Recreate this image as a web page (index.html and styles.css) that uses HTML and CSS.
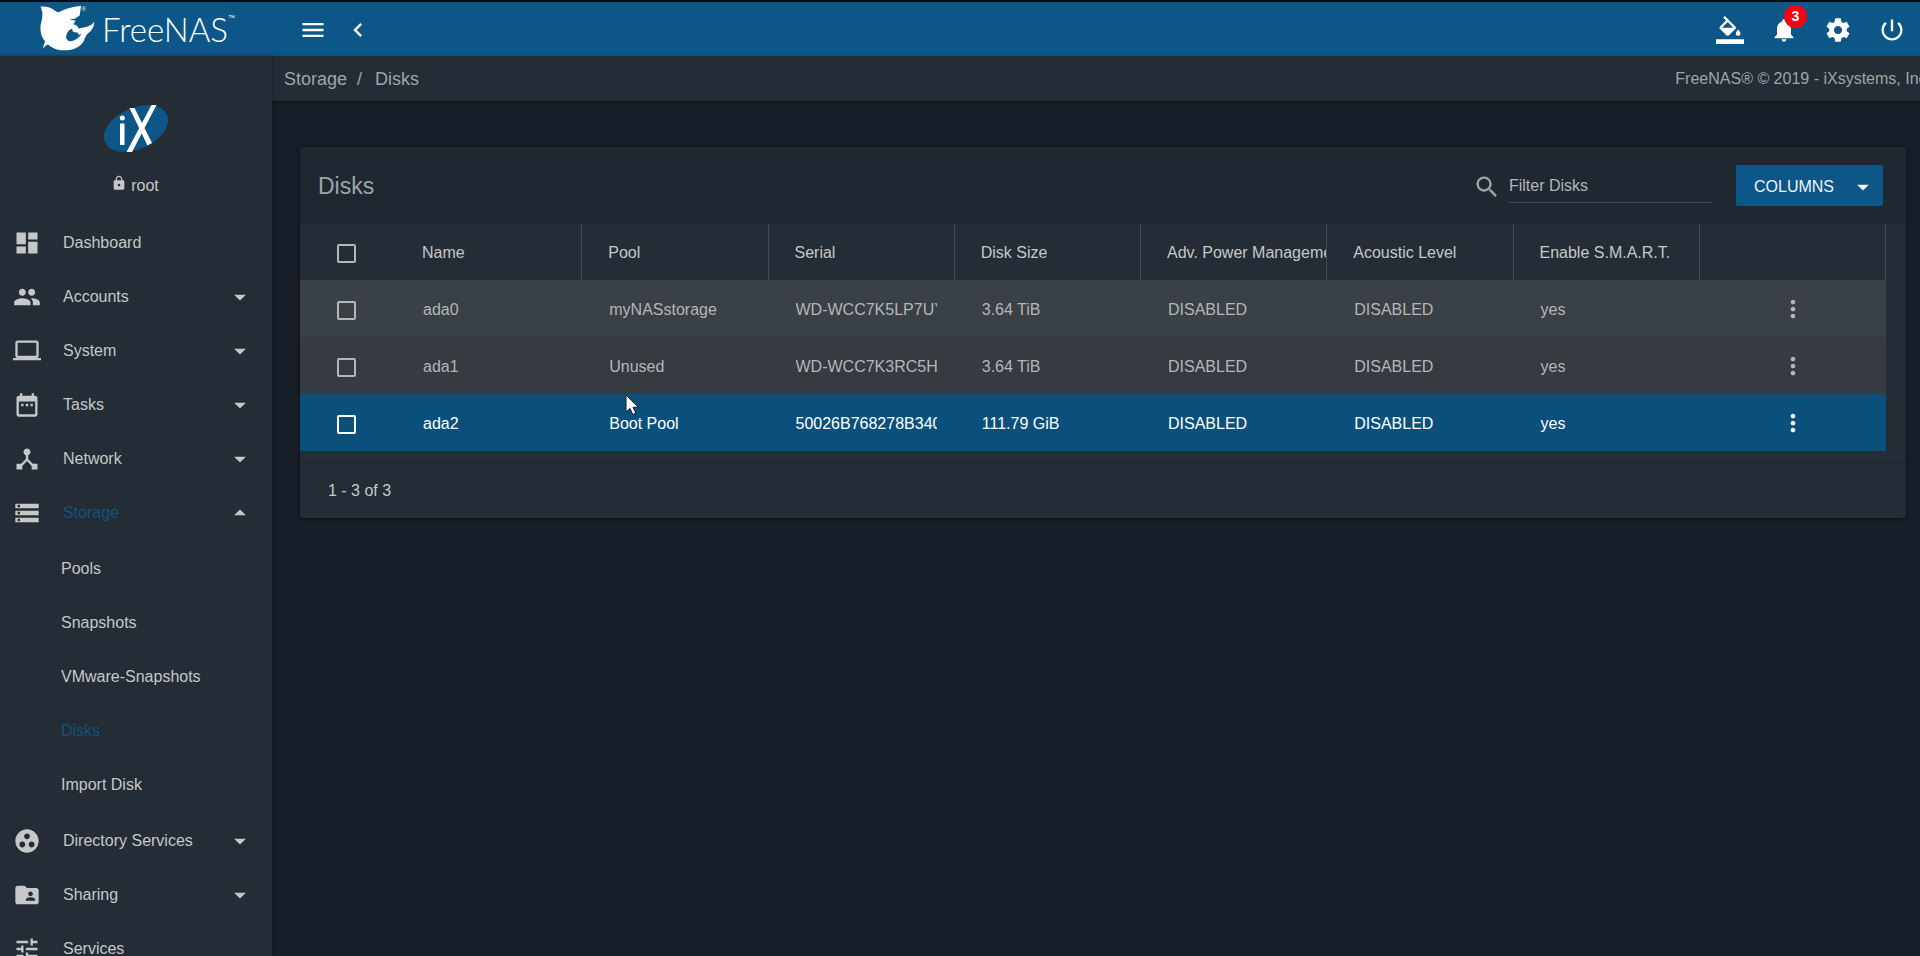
FILE: index.html
```html
<!DOCTYPE html>
<html lang="en">
<head>
    <meta charset="UTF-8">
    <meta name="viewport" content="width=device-width, initial-scale=1.0">
    <title>FreeNAS - Disks</title>
    <link rel="stylesheet" href="styles.css">
</head>
<body>
    <!-- Icon sprite -->
    <svg class="sprite" aria-hidden="true">
        <symbol id="menu" viewBox="0 0 24 24"><path d="M3 18h18v-2H3v2zm0-5h18v-2H3v2zm0-7v2h18V6H3z"/></symbol>
        <symbol id="chevron-left" viewBox="0 0 24 24"><path d="M15.41 7.41L14 6l-6 6 6 6 1.41-1.41L10.83 12z"/></symbol>
        <symbol id="color-fill" viewBox="0 0 24 24"><path d="M16.56 8.94L7.62 0 6.21 1.41l2.38 2.38-5.15 5.15c-.59.59-.59 1.54 0 2.12l5.5 5.5c.29.29.68.44 1.06.44s.77-.15 1.06-.44l5.5-5.5c.59-.58.59-1.53 0-2.12zM5.21 10L10 5.21 14.79 10H5.21zM19 11.5s-2 2.17-2 3.5c0 1.1.9 2 2 2s2-.9 2-2c0-1.33-2-3.5-2-3.5zM0 20h24v4H0v-4z"/></symbol>
        <symbol id="bell" viewBox="0 0 24 24"><path d="M12 22c1.1 0 2-.9 2-2h-4c0 1.1.89 2 2 2zm6-6v-5c0-3.07-1.64-5.64-4.5-6.32V4c0-.83-.67-1.5-1.5-1.5s-1.5.67-1.5 1.5v.68C7.63 5.36 6 7.92 6 11v5l-2 2v1h16v-1l-2-2z"/></symbol>
        <symbol id="settings" viewBox="0 0 24 24"><path d="M19.43 12.98c.04-.32.07-.64.07-.98s-.03-.66-.07-.98l2.11-1.65c.19-.15.24-.42.12-.64l-2-3.46c-.12-.22-.39-.3-.61-.22l-2.49 1c-.52-.4-1.08-.73-1.69-.98l-.38-2.65C14.46 2.18 14.25 2 14 2h-4c-.25 0-.46.18-.49.42l-.38 2.65c-.61.25-1.17.59-1.69.98l-2.49-1c-.23-.09-.49 0-.61.22l-2 3.46c-.13.22-.07.49.12.64l2.11 1.65c-.04.32-.07.65-.07.98s.03.66.07.98l-2.11 1.65c-.19.15-.24.42-.12.64l2 3.46c.12.22.39.3.61.22l2.49-1c.52.4 1.08.73 1.69.98l.38 2.65c.03.24.24.42.49.42h4c.25 0 .46-.18.49-.42l.38-2.65c.61-.25 1.17-.59 1.69-.98l2.49 1c.23.09.49 0 .61-.22l2-3.46c.12-.22.07-.49-.12-.64l-2.11-1.65zM12 15.5c-1.93 0-3.5-1.57-3.5-3.5s1.57-3.5 3.5-3.5 3.5 1.57 3.5 3.5-1.57 3.5-3.5 3.5z"/></symbol>
        <symbol id="power" viewBox="0 0 24 24"><path d="M13 3h-2v10h2V3zm4.83 2.17l-1.42 1.42C17.99 7.86 19 9.81 19 12c0 3.87-3.13 7-7 7s-7-3.13-7-7c0-2.19 1.01-4.14 2.58-5.42L6.17 5.17C4.23 6.82 3 9.26 3 12c0 4.97 4.03 9 9 9s9-4.03 9-9c0-2.74-1.23-5.18-3.17-6.83z"/></symbol>
        <symbol id="lock" viewBox="0 0 24 24"><path d="M18 8h-1V6c0-2.76-2.24-5-5-5S7 3.24 7 6v2H6c-1.100 0-2 .9-2 2v10c0 1.100.9 2 2 2h12c1.100 0 2-.9 2-2V10c0-1.100-.9-2-2-2zm-6 9c-1.100 0-2-.9-2-2s.9-2 2-2 2 .9 2 2-.9 2-2 2zm3.100-9H8.900V6c0-1.710 1.390-3.100 3.100-3.100 1.710 0 3.100 1.390 3.100 3.100v2z"/></symbol>
        <symbol id="dashboard" viewBox="0 0 24 24"><path d="M3 13h8V3H3v10zm0 8h8v-6H3v6zm10 0h8V11h-8v10zm0-18v6h8V3h-8z"/></symbol>
        <symbol id="group" viewBox="0 0 24 24"><path d="M16 11c1.66 0 2.99-1.34 2.99-3S17.66 5 16 5c-1.66 0-3 1.34-3 3s1.34 3 3 3zm-8 0c1.66 0 2.99-1.34 2.99-3S9.66 5 8 5C6.34 5 5 6.34 5 8s1.34 3 3 3zm0 2c-2.33 0-7 1.17-7 3.5V19h14v-2.500c0-2.330-4.670-3.500-7-3.500zm8 0c-.29 0-.62.020-.97.050 1.160.84 1.970 1.970 1.970 3.450V19h6v-2.500c0-2.330-4.670-3.500-7-3.500z"/></symbol>
        <symbol id="laptop" viewBox="0 0 24 24"><path d="M20 18c1.100 0 1.990-.9 1.990-2L22 5c0-1.100-.9-2-2-2H4c-1.100 0-2 .9-2 2v11c0 1.100.9 2 2 2H0v2h24v-2h-4zM4 5h16v11H4V5z"/></symbol>
        <symbol id="date" viewBox="0 0 24 24"><path d="M9 11H7v2h2v-2zm4 0h-2v2h2v-2zm4 0h-2v2h2v-2zm2-7h-1V2h-2v2H8V2H6v2H5c-1.110 0-1.990.9-1.990 2L3 20c0 1.100.89 2 2 2h14c1.100 0 2-.9 2-2V6c0-1.100-.9-2-2-2zm0 16H5V9h14v11z"/></symbol>
        <symbol id="hub" viewBox="0 0 24 24"><path d="M17 16l-4-4V8.820C14.160 8.400 15 7.300 15 6c0-1.660-1.340-3-3-3S9 4.340 9 6c0 1.300.84 2.400 2 2.820V12l-4 4H3v5h5v-3.050l4-4.200 4 4.200V21h5v-5h-4z"/></symbol>
        <symbol id="storage" viewBox="0 0 24 24"><path d="M2 20h20v-4H2v4zm2-3h2v2H4v-2zM2 4v4h20V4H2zm4 3H4V5h2v2zm-4 7h20v-4H2v4zm2-3h2v2H4v-2z"/></symbol>
        <symbol id="group-work" viewBox="0 0 24 24"><path d="M12 2C6.480 2 2 6.480 2 12s4.480 10 10 10 10-4.480 10-10S17.520 2 12 2zM8 17.500c-1.380 0-2.500-1.120-2.500-2.500s1.120-2.500 2.500-2.500 2.500 1.120 2.500 2.500-1.120 2.500-2.500 2.500zM9.500 8c0-1.380 1.120-2.500 2.500-2.500s2.500 1.120 2.500 2.500-1.120 2.500-2.500 2.500S9.500 9.380 9.500 8zm6.500 9.500c-1.380 0-2.500-1.120-2.500-2.500s1.120-2.500 2.500-2.500 2.500 1.120 2.500 2.500-1.120 2.500-2.500 2.500z"/></symbol>
        <symbol id="folder-shared" viewBox="0 0 24 24"><path d="M20 6h-8l-2-2H4c-1.100 0-1.990.9-1.990 2L2 18c0 1.100.9 2 2 2h16c1.100 0 2-.9 2-2V8c0-1.100-.9-2-2-2zm-5 3c1.100 0 2 .9 2 2s-.9 2-2 2-2-.9-2-2 .9-2 2-2zm4 8h-8v-1c0-1.330 2.670-2 4-2s4 .67 4 2v1z"/></symbol>
        <symbol id="tune" viewBox="0 0 24 24"><path d="M3 17v2h6v-2H3zM3 5v2h10V5H3zm10 16v-2h8v-2h-8v-2h-2v6h2zM7 9v2H3v2h4v2h2V9H7zm14 4v-2H11v2h10zm-6-4h2V7h4V5h-4V3h-2v6z"/></symbol>
        <symbol id="arrow-down" viewBox="0 0 24 24"><path d="M7 10l5 5 5-5z"/></symbol>
        <symbol id="arrow-up" viewBox="0 0 24 24"><path d="M7 14l5-5 5 5z"/></symbol>
        <symbol id="search" viewBox="0 0 24 24"><path d="M15.500 14h-.79l-.28-.27C15.410 12.590 16 11.110 16 9.500 16 5.910 13.090 3 9.500 3S3 5.910 3 9.500 5.910 16 9.500 16c1.610 0 3.090-.59 4.230-1.570l.27.28v.79l5 4.990L20.490 19l-4.990-5zm-6 0C7.010 14 5 11.990 5 9.500S7.010 5 9.500 5 14 7.010 14 9.500 11.990 14 9.500 14z"/></symbol>
        <symbol id="more" viewBox="0 0 24 24"><path d="M12 8c1.100 0 2-.9 2-2s-.9-2-2-2-2 .9-2 2 .9 2 2 2zm0 2c-1.100 0-2 .9-2 2s.9 2 2 2 2-.9 2-2-.9-2-2-2zm0 6c-1.100 0-2 .9-2 2s.9 2 2 2 2-.9 2-2-.9-2-2-2z"/></symbol>
    </svg>

    <header class="topbar">
        <a class="brand" href="#" aria-label="FreeNAS">
            <svg class="fish" viewBox="36 2 68 54">
                <path d="M40.700 6C46 5.500 52 7 56 10.500Q58 12 60 11.500C66 8 74 6 82.400 5L81 15 76 18.500 70 19 77 20.500 74.500 24 78 25.500 80 28.500 85 27.500C90 27 94 24.500 96 21.500 96 28 92.500 31 89 34 87 37 86 39 85.500 41 82 47 75 51 65 51 58 51 52 48.500 48.500 45 47.500 45 45 47 43.500 49 43.500 46 44.500 44 45.500 42 42 38 40.500 33 40.500 28 40.500 23 42.500 20 42.500 16 43 12 42 9 40.700 6Z"/>
                <path class="fish-gap" d="M73.500 28.500C69 30 66.500 34.500 67.200 39L70 41.500C74.500 42 79.500 39.500 83 34 80.500 35.500 78.500 34 79.500 32.500 77 32.500 72.500 33 73.500 28.500Z"/>
                <text class="fish-mark" x="83" y="10">®</text>
            </svg>
            <span class="brand-name">FreeNAS</span><span class="brand-tm">™</span>
        </a>
        <div class="topbar-left">
            <button class="icon-button" aria-label="Toggle menu"><svg class="icon"><use href="#menu"/></svg></button>
            <button class="icon-button" aria-label="Collapse menu"><svg class="icon"><use href="#chevron-left"/></svg></button>
        </div>
        <div class="topbar-right">
            <button class="icon-button" aria-label="Theme"><svg class="icon"><use href="#color-fill"/></svg></button>
            <button class="icon-button" aria-label="Alerts"><svg class="icon"><use href="#bell"/></svg><span class="badge">3</span></button>
            <button class="icon-button" aria-label="Settings"><svg class="icon"><use href="#settings"/></svg></button>
            <button class="icon-button" aria-label="Power"><svg class="icon"><use href="#power"/></svg></button>
        </div>
    </header>

    <div class="layout">
        <aside class="sidebar">
            <div class="user">
                <svg class="ix-logo" viewBox="0 0 64 48">
                    <ellipse cx="32" cy="24.500" rx="34" ry="20.500" transform="rotate(-24 32 24.500)"/>
                    <path d="M16 19.500h4.500V41H16zM25.500 4H30.500L48 39 43.500 41.500zM47.500 1H52.500L28 48H22.500z"/>
                    <circle class="ix-dot" cx="18.300" cy="14" r="2.500"/>
                </svg>
                <div class="user-name"><svg class="icon-small"><use href="#lock"/></svg>root</div>
            </div>
            <nav>
                <ul class="nav">
                    <li><a class="nav-item" href="#"><svg class="icon"><use href="#dashboard"/></svg>Dashboard</a></li>
                    <li><button class="nav-item"><svg class="icon"><use href="#group"/></svg>Accounts<svg class="icon arrow"><use href="#arrow-down"/></svg></button></li>
                    <li><button class="nav-item"><svg class="icon"><use href="#laptop"/></svg>System<svg class="icon arrow"><use href="#arrow-down"/></svg></button></li>
                    <li><button class="nav-item"><svg class="icon"><use href="#date"/></svg>Tasks<svg class="icon arrow"><use href="#arrow-down"/></svg></button></li>
                    <li><button class="nav-item"><svg class="icon"><use href="#hub"/></svg>Network<svg class="icon arrow"><use href="#arrow-down"/></svg></button></li>
                    <li>
                        <button class="nav-item active" aria-expanded="true"><svg class="icon"><use href="#storage"/></svg>Storage<svg class="icon arrow"><use href="#arrow-up"/></svg></button>
                        <ul class="subnav">
                            <li><a class="nav-item" href="#">Pools</a></li>
                            <li><a class="nav-item" href="#">Snapshots</a></li>
                            <li><a class="nav-item" href="#">VMware-Snapshots</a></li>
                            <li><a class="nav-item active" href="#">Disks</a></li>
                            <li><a class="nav-item" href="#">Import Disk</a></li>
                        </ul>
                    </li>
                    <li><button class="nav-item"><svg class="icon"><use href="#group-work"/></svg>Directory Services<svg class="icon arrow"><use href="#arrow-down"/></svg></button></li>
                    <li><button class="nav-item"><svg class="icon"><use href="#folder-shared"/></svg>Sharing<svg class="icon arrow"><use href="#arrow-down"/></svg></button></li>
                    <li><a class="nav-item" href="#"><svg class="icon"><use href="#tune"/></svg>Services</a></li>
                </ul>
            </nav>
        </aside>

        <main class="content">
            <div class="breadcrumb">
                <div class="crumbs"><a href="#">Storage</a><span>/</span><a href="#">Disks</a></div>
                <div class="copyright">FreeNAS® © 2019 - iXsystems, Inc.</div>
            </div>

            <section class="card">
                <div class="card-header">
                    <h1>Disks</h1>
                    <label class="filter">
                        <svg class="icon"><use href="#search"/></svg>
                        <input type="text" placeholder="Filter Disks" aria-label="Filter Disks">
                    </label>
                    <button class="columns-button">COLUMNS<svg class="icon"><use href="#arrow-down"/></svg></button>
                </div>

                <div class="card-body">
                    <table class="disks">
                        <thead>
                            <tr>
                                <th class="check"><input type="checkbox" aria-label="Select all"></th>
                                <th>Name</th>
                                <th>Pool</th>
                                <th>Serial</th>
                                <th>Disk Size</th>
                                <th>Adv. Power Management</th>
                                <th>Acoustic Level</th>
                                <th>Enable S.M.A.R.T.</th>
                                <th></th>
                            </tr>
                        </thead>
                        <tbody>
                            <tr>
                                <td class="check"><input type="checkbox" aria-label="Select ada0"></td>
                                <td>ada0</td>
                                <td>myNASstorage</td>
                                <td><div class="clip">WD-WCC7K5LP7UY</div></td>
                                <td>3.64 TiB</td>
                                <td>DISABLED</td>
                                <td>DISABLED</td>
                                <td>yes</td>
                                <td class="actions"><button class="icon-button" aria-label="ada0 options"><svg class="icon"><use href="#more"/></svg></button></td>
                            </tr>
                            <tr>
                                <td class="check"><input type="checkbox" aria-label="Select ada1"></td>
                                <td>ada1</td>
                                <td>Unused</td>
                                <td><div class="clip">WD-WCC7K3RC5H</div></td>
                                <td>3.64 TiB</td>
                                <td>DISABLED</td>
                                <td>DISABLED</td>
                                <td>yes</td>
                                <td class="actions"><button class="icon-button" aria-label="ada1 options"><svg class="icon"><use href="#more"/></svg></button></td>
                            </tr>
                            <tr class="hovered">
                                <td class="check"><input type="checkbox" aria-label="Select ada2"></td>
                                <td>ada2</td>
                                <td>Boot Pool</td>
                                <td><div class="clip">50026B768278B340</div></td>
                                <td>111.79 GiB</td>
                                <td>DISABLED</td>
                                <td>DISABLED</td>
                                <td>yes</td>
                                <td class="actions"><button class="icon-button" aria-label="ada2 options"><svg class="icon"><use href="#more"/></svg></button></td>
                            </tr>
                        </tbody>
                    </table>
                </div>

                <div class="card-footer">1 - 3 of 3</div>
            </section>
        </main>
    </div>

    <svg class="pointer" viewBox="0 0 15 22" aria-hidden="true"><path d="M1 1v17l4-3.500 2.800 6 3-1.400-2.800-5.800h5.500z"/></svg>
</body>
</html>
```

FILE: styles.css
```css
* {
    box-sizing: border-box;
}

body {
    font-family: "Liberation Sans", Arial, sans-serif;
    font-size: 16px;
    line-height: 24px;
    background-color: #171e27;
    color: #c6c7c8;
    margin: 0;
    height: 100vh;
    display: flex;
    flex-direction: column;
    overflow: hidden;
}

a {
    color: inherit;
    text-decoration: none;
}

button {
    font: inherit;
    color: inherit;
    background: none;
    border: 0;
    padding: 0;
    cursor: pointer;
}

ul {
    list-style: none;
    margin: 0;
    padding: 0;
}

.sprite {
    display: none;
}

.icon {
    width: 28px;
    height: 28px;
    flex: none;
    display: block;
    fill: currentColor;
}

.icon-small {
    width: 16px;
    height: 18px;
    fill: currentColor;
}

.icon-button {
    position: relative;
    display: inline-block;
}

/* Top bar */
.topbar {
    height: 56px;
    flex: none;
    display: flex;
    align-items: center;
    background-color: #0d5788;
    border-top: 2px solid #05090d;
    color: #fff;
}

.brand {
    width: 272px;
    height: 54px;
    padding-left: 36px;
    display: flex;
    border-right: 1px solid #0b5182;
}

.fish {
    width: 66px;
    height: 54px;
    fill: #fff;
}

.fish .fish-gap {
    fill: #0d5788;
}

.fish-mark {
    font-size: 6px;
}

.brand-name {
    font-family: Lato, sans-serif;
    font-weight: 300;
    font-size: 33px;
    line-height: 54px;
}

.brand-tm {
    font-size: 7px;
    line-height: 32px;
}

.topbar-left {
    display: flex;
    gap: 17px;
    padding-top: 2px;
    padding-left: 27px;
}

.topbar-right {
    display: flex;
    gap: 26px;
    margin-left: auto;
    padding-top: 2px;
    padding-right: 14px;
}

.badge {
    position: absolute;
    top: -11px;
    right: -9px;
    width: 23px;
    height: 23px;
    border-radius: 50%;
    background-color: #f80314;
    font-size: 14px;
    font-weight: bold;
    line-height: 23px;
    text-align: center;
}

/* Sidebar */
.layout {
    flex: 1;
    min-height: 0;
    display: flex;
}

.sidebar {
    width: 272px;
    flex: none;
    overflow: hidden;
    background-color: #242d35;
    box-shadow: 0 0 4px rgba(0, 0, 0, 0.4);
    z-index: 1;
}

.user {
    display: flex;
    flex-direction: column;
    align-items: center;
    gap: 22px;
    padding: 48px 0 18px;
}

.ix-logo {
    width: 64px;
    height: 48px;
    fill: #fff;
}

.ix-logo ellipse {
    fill: #0d5788;
}

.user-name {
    display: flex;
    gap: 4px;
    padding-right: 2px;
}

.nav-item {
    width: 100%;
    height: 54px;
    display: flex;
    align-items: center;
    gap: 22px;
    padding: 0 18px 0 13px;
    text-align: left;
}

.nav-item.active {
    color: #0f5280;
}

.nav-item .icon {
    color: #c6c7c8;
}

.nav-item .arrow {
    margin-left: auto;
}

.subnav {
    padding: 2px 0;
}

.subnav .nav-item {
    padding-left: 61px;
}

/* Main area */
.content {
    flex: 1;
    min-width: 0;
}

.breadcrumb {
    height: 45px;
    display: flex;
    justify-content: space-between;
    align-items: center;
    padding-top: 1px;
    padding-left: 12px;
    background-color: #242d35;
    box-shadow: 0 1px 3px rgba(0, 0, 0, 0.4);
    color: #a1a3a5;
    white-space: nowrap;
}

.crumbs {
    display: flex;
    gap: 10px;
    font-size: 18px;
}

.crumbs a:last-child {
    padding-left: 3px;
}

/* the copyright line runs off the window edge */
.copyright {
    margin-right: -11px;
}

.card {
    margin: 46px 14px 0 28px;
    background-color: #242d35;
    border-radius: 3px;
    box-shadow: 0 1px 4px rgba(0, 0, 0, 0.5);
}

.card-header {
    display: flex;
    align-items: center;
    height: 77px;
    padding: 0 23px 0 18px;
    background-color: #1f2830;
    border-bottom: 1px solid #1c242c;
    border-radius: 3px 3px 0 0;
}

.card-header h1 {
    margin: 0 auto 0 0;
    padding-top: 2px;
    font-size: 23px;
    font-weight: normal;
    color: #a1a3a5;
}

.filter {
    display: flex;
    align-items: center;
    gap: 8px;
    margin-right: 23px;
    padding-top: 3px;
    color: #a1a3a5;
}

.filter input {
    width: 204px;
    height: 32px;
    padding: 0;
    background: none;
    border: 0;
    border-bottom: 1px solid #444a53;
    font: inherit;
    color: #c6c7c8;
    outline: none;
}

.filter input::placeholder {
    color: #b4b6b7;
    opacity: 1;
}

.columns-button {
    display: flex;
    align-items: center;
    gap: 15px;
    height: 41px;
    padding: 3px 6px 0 18px;
    background-color: #0d5788;
    border-radius: 2px;
    color: #f0f4f7;
}

/* Table */
.card-body {
    padding: 0 20px 11px 0;
}

.disks {
    width: 100%;
    table-layout: fixed;
    border-collapse: separate;
    border-spacing: 0;
}

.disks th {
    height: 56px;
    padding: 2px 0 0 26px;
    border-right: 1px solid #444b52;
    font-weight: normal;
    text-align: left;
    white-space: nowrap;
    overflow: hidden;
}

.disks td {
    height: 57px;
    padding: 3px 18px 0 27px;
    white-space: nowrap;
    color: #b4b6b7;
    background-color: #394046;
}

.disks tr:nth-child(2) td {
    background-color: #353b41;
}

.disks .hovered td {
    background-color: #0b507d;
    color: #fff;
}

.disks .check {
    width: 96px;
    padding-right: 0;
    padding-left: 37px;
    border: 0;
}

.disks .actions {
    padding: 0;
    text-align: center;
}

.actions .icon-button {
    display: block;
    margin: 0 auto;
}

.clip {
    overflow: hidden;
}

input[type="checkbox"] {
    appearance: none;
    display: block;
    width: 19px;
    height: 19px;
    margin: 0;
    border: 2px solid #b4b6b7;
    border-radius: 2px;
}

.hovered input[type="checkbox"] {
    border-color: #fff;
}

.card-footer {
    height: 56px;
    padding: 0 28px;
    border-top: 1px solid #1c242c;
    line-height: 56px;
}

/* Mouse pointer over the page */
.pointer {
    position: absolute;
    left: 625px;
    top: 394px;
    width: 15px;
    height: 22px;
    fill: #fff;
    stroke: #14202c;
}
```
